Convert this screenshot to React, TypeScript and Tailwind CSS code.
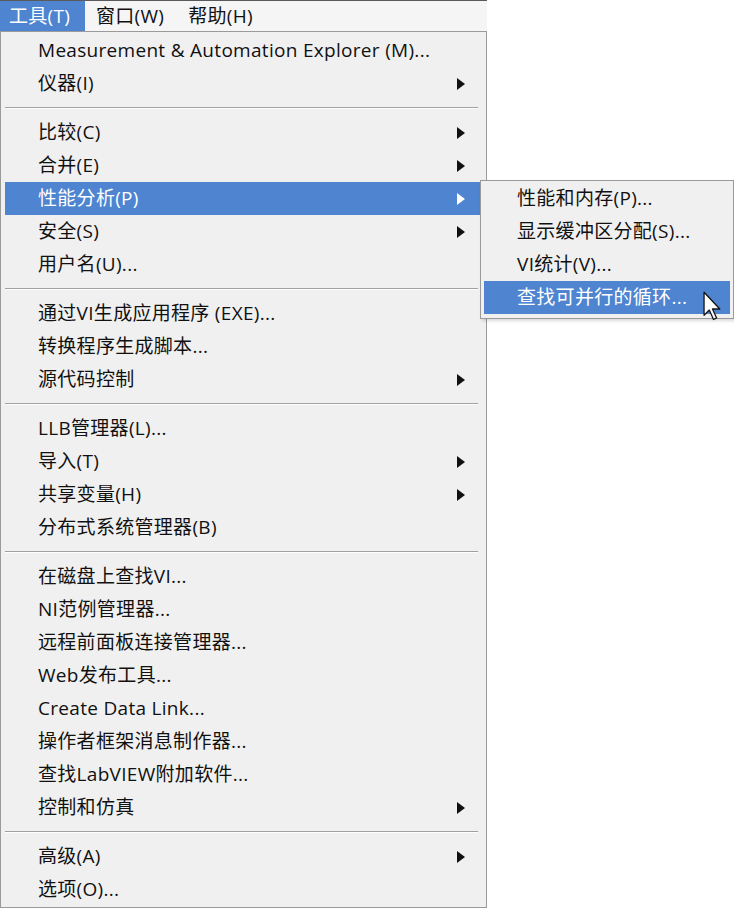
import React from "react";

type Item = { label: string; arrow?: boolean; active?: boolean } | "sep";

const items: Item[] = [
  { label: "Measurement & Automation Explorer (M)..." },
  { label: "仪器(I)", arrow: true },
  "sep",
  { label: "比较(C)", arrow: true },
  { label: "合并(E)", arrow: true },
  { label: "性能分析(P)", arrow: true, active: true },
  { label: "安全(S)", arrow: true },
  { label: "用户名(U)..." },
  "sep",
  { label: "通过VI生成应用程序 (EXE)..." },
  { label: "转换程序生成脚本..." },
  { label: "源代码控制", arrow: true },
  "sep",
  { label: "LLB管理器(L)..." },
  { label: "导入(T)", arrow: true },
  { label: "共享变量(H)", arrow: true },
  { label: "分布式系统管理器(B)" },
  "sep",
  { label: "在磁盘上查找VI..." },
  { label: "NI范例管理器..." },
  { label: "远程前面板连接管理器..." },
  { label: "Web发布工具..." },
  { label: "Create Data Link..." },
  { label: "操作者框架消息制作器..." },
  { label: "查找LabVIEW附加软件..." },
  { label: "控制和仿真", arrow: true },
  "sep",
  { label: "高级(A)", arrow: true },
  { label: "选项(O)..." },
];

const sub = [
  { label: "性能和内存(P)..." },
  { label: "显示缓冲区分配(S)..." },
  { label: "VI统计(V)..." },
  { label: "查找可并行的循环...", active: true },
];

function Arrow({ white }: { white?: boolean }) {
  return (
    <svg width="8" height="12" viewBox="0 0 8 12" className="shrink-0">
      <path d="M0 0 L8 6 L0 12 Z" fill={white ? "#ffffff" : "#111111"} />
    </svg>
  );
}

const font = {
  fontFamily: '"Open Sans", "Noto Sans CJK SC", sans-serif',
};

export default function App() {
  return (
    <div
      className="relative w-[734px] h-[909px] bg-white text-[19px] tracking-[0.3px] text-[#111111]"
      style={font}
    >
      <div className="w-[487px] h-[31px] flex items-stretch bg-[#f5f5f5] border-t border-[#5a5a5a]">
        <div className="w-[85px] flex items-center pl-[9px] bg-[#4e84d0] text-white">工具(T)</div>
        <div className="flex items-center pl-[11px]">窗口(W)</div>
        <div className="flex items-center pl-[24px]">帮助(H)</div>
      </div>
      <div className="w-[487px] bg-[#f0f0f0] border border-[#9a9a9a] pt-[2px] pb-[1px] px-[4px] flex flex-col">
        {items.map((it, i) =>
          it === "sep" ? (
            <div key={i} className="h-[16px] flex flex-col justify-center pr-[4px]">
              <div className="h-px bg-[#a0a0a0]" />
              <div className="h-px bg-white" />
            </div>
          ) : (
            <div
              key={i}
              className={
                "h-[33px] flex items-center pl-[33px] pr-[17px] " +
                (it.active ? "bg-[#4e84d0] text-white" : "")
              }
            >
              <span className="flex-1 whitespace-nowrap leading-none">{it.label}</span>
              {it.arrow && <Arrow white={it.active} />}
            </div>
          )
        )}
      </div>
      <div className="absolute left-[480px] top-[180px] w-[254px] h-[139px] bg-[#f0f0f0] border border-[#9a9a9a] pt-[1px] px-[3px] shadow-[2px_2px_3px_rgba(0,0,0,0.15)] flex flex-col">
        {sub.map((s, i) => (
          <div
            key={i}
            className={
              "h-[33px] flex items-center pl-[33px] whitespace-nowrap leading-none " +
              (s.active ? "bg-[#4e84d0] text-white" : "")
            }
          >
            {s.label}
          </div>
        ))}
      </div>
      <svg className="absolute left-[703px] top-[291px]" width="21" height="36" viewBox="0 0 20 34">
        <path
          d="M1 1 L1 23 L6 18 L10 27 L13 25.5 L9 17 L16 17 Z"
          fill="#ffffff"
          stroke="#111"
          strokeWidth="1.2"
          strokeLinejoin="round"
        />
      </svg>
    </div>
  );
}
